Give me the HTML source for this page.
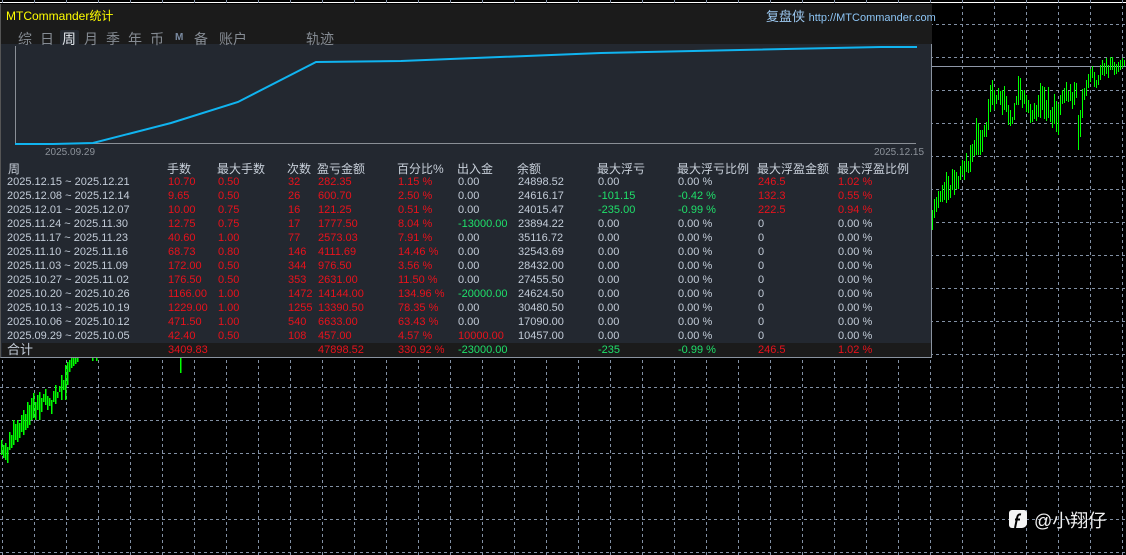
<!DOCTYPE html>
<html><head><meta charset="utf-8"><style>
*{margin:0;padding:0;box-sizing:border-box}
body{width:1126px;height:555px;background:#000;position:relative;overflow:hidden;font-family:"Liberation Sans","Noto Sans CJK SC",sans-serif;}
.a{position:absolute;white-space:nowrap}
#panel{position:absolute;left:0;top:4px;width:932px;height:354px;background:#232830;border-right:1px solid #8a93a0;border-bottom:1px solid #8a93a0;border-left:1px solid #555}
#title{position:absolute;left:0;top:0;width:931px;height:40px;background:#1b1b1b}
.t{font-size:11px;line-height:14px;color:#c3ccd8}
.r{color:#e8121c}.g{color:#1fe06a}
.h{font-size:12px;color:#c8d0da}
.tab{font-size:14px;color:#858b93;top:25px}
#tot{position:absolute;left:1px;top:339px;width:929px;height:14px;background:#1b1b1b}
</style></head><body>
<svg class="a" style="left:0;top:0" width="1126" height="555" shape-rendering="crispEdges">
<line x1="0" y1="2.5" x2="1126" y2="2.5" stroke="#fff" stroke-width="1"/>
<g stroke="#8290a4" stroke-width="1" stroke-dasharray="3,3">
<path d="M2.5 0V555M34.5 0V555M66.5 0V555M98.5 0V555M130.5 0V555M162.5 0V555M194.5 0V555M226.5 0V555M258.5 0V555M290.5 0V555M322.5 0V555M354.5 0V555M386.5 0V555M418.5 0V555M450.5 0V555M482.5 0V555M514.5 0V555M546.5 0V555M578.5 0V555M610.5 0V555M642.5 0V555M674.5 0V555M706.5 0V555M738.5 0V555M770.5 0V555M802.5 0V555M834.5 0V555M866.5 0V555M898.5 0V555M930.5 0V555M962.5 0V555M994.5 0V555M1026.5 0V555M1058.5 0V555M1090.5 0V555M1122.5 0V555"/>
<path d="M0 24.5H1126M0 57.5H1126M0 90.5H1126M0 123.5H1126M0 156.5H1126M0 189.5H1126M0 222.5H1126M0 255.5H1126M0 288.5H1126M0 321.5H1126M0 354.5H1126M0 387.5H1126M0 420.5H1126M0 453.5H1126M0 486.5H1126M0 519.5H1126M0 552.5H1126"/>
</g>
<line x1="931" y1="66.5" x2="1126" y2="66.5" stroke="#8f98a8"/>
<path stroke="#00ff00" stroke-width="1.5" fill="none" d="M1.5 440V455M3.5 445V458M5.5 443V460M7.5 447V463M9.5 432V450M11.5 435V448M13.5 420V445M15.5 424V440M17.5 420V442M19.5 423V438M21.5 415V432M23.5 410V435M25.5 414V430M27.5 402V428M29.5 405V425M31.5 398V420M33.5 393V418M35.5 402V420M37.5 395V410M39.5 392V420M41.5 398V412M43.5 394V402M45.5 389V405M47.5 396V410M49.5 398V406M51.5 400V414M53.5 391V402M55.5 385V404M57.5 392V398M59.5 386V392M61.5 375V400M63.5 380V390M65.5 365V400M67.5 362V385M69.5 360V372M71.5 358V368M73.5 358V366M75.5 358V364M77.5 358V362M92.5 357V361M96.5 357V361M180.5 357V373"/>
<path stroke="#00ff00" stroke-width="1" d="M932.5 210V230M934.5 199V218M936.5 197V212M938.5 191V208M940.5 191V202M942.5 185V202M944.5 182V200M946.5 172V203M948.5 176V200M950.5 185V198M952.5 169V190M954.5 170V195M956.5 172V189M958.5 176V189M960.5 166V180M962.5 160V175M964.5 161V180M966.5 153V172M968.5 161V173M970.5 145V172M972.5 144V162M974.5 140V156M976.5 118V155M978.5 123V155M980.5 130V155M982.5 130V152M984.5 125V137M986.5 122V137M988.5 99V130M990.5 85V112M992.5 80V105M994.5 90V110M996.5 95V104M998.5 88V100M1000.5 91V105M1002.5 90V115M1004.5 86V110M1006.5 96V112M1008.5 105V125M1010.5 110V126M1012.5 117V124M1014.5 103V120M1016.5 96V105M1018.5 76V105M1020.5 78V100M1022.5 90V108M1024.5 90V104M1026.5 95V112M1028.5 100V113M1030.5 104V123M1032.5 110V122M1034.5 103V119M1036.5 105V121M1038.5 95V117M1040.5 83V118M1042.5 86V110M1044.5 87V119M1046.5 100V121M1048.5 87V118M1050.5 110V122M1052.5 107V128M1054.5 94V124M1056.5 101V132M1058.5 104V135M1060.5 95V115M1062.5 90V104M1064.5 88V103M1066.5 82V101M1068.5 91V102M1070.5 84V101M1072.5 92V109M1074.5 82V105M1076.5 83V98M1078.5 115V150M1080.5 110V137M1082.5 89V118M1084.5 88V100M1086.5 80V96M1088.5 74V88M1090.5 69V82M1092.5 66V78M1094.5 72V87M1096.5 80V88M1098.5 75V85M1100.5 65V80M1102.5 60V75M1104.5 63V76M1106.5 58V74M1108.5 65V78M1110.5 57V70M1112.5 57V70M1114.5 62V75M1116.5 64V74M1118.5 62V72M1120.5 60V70M1122.5 58V68M1124.5 60V66"/>
</svg>

<div id="panel">
<div id="title"></div>
<div class="a" style="left:5px;top:3px;font-size:12px;color:#ffff00">MTCommander统计</div>
<div class="a" style="left:765px;top:2px;font-size:13px;color:#9cc8f0">复盘侠 <span style="font-size:11px;color:#8cc4f4">http://MTCommander.com</span></div>
<div class="a" style="left:59px;top:26px;width:19px;height:17px;background:#232830;border-radius:2px"></div>
<div class="a tab" style="left:17px">综</div>
<div class="a tab" style="left:39px">日</div>
<div class="a tab" style="left:61px;color:#dfe4ea">周</div>
<div class="a tab" style="left:83px">月</div>
<div class="a tab" style="left:105px">季</div>
<div class="a tab" style="left:127px">年</div>
<div class="a tab" style="left:149px">币</div>
<div class="a tab" style="left:174px;font-size:10px;top:28px;color:#7a8aa0;font-weight:bold">M</div>
<div class="a tab" style="left:193px">备</div>
<div class="a tab" style="left:218px">账户</div>
<div class="a tab" style="left:305px">轨迹</div>
<svg class="a" style="left:0;top:36px" width="931" height="120">
<line x1="14.5" y1="6" x2="14.5" y2="104" stroke="#8a8f96"/>
<line x1="14" y1="103.5" x2="915" y2="103.5" stroke="#8a8f96"/>
<polyline fill="none" stroke="#10b4f0" stroke-width="2" points="14,104 52,104 92,103 170,83 237,62 315,22 400,21 600,13 880,7 916,7"/>
<text x="44" y="115" font-size="10" fill="#8c929a" font-family="Liberation Sans">2025.09.29</text>
<text x="873" y="115" font-size="10" fill="#8c929a" font-family="Liberation Sans">2025.12.15</text>
</svg>
<div class="a h" style="left:7px;top:156px">周</div>
<div class="a h" style="left:166px;top:156px">手数</div>
<div class="a h" style="left:216px;top:156px">最大手数</div>
<div class="a h" style="left:286px;top:156px">次数</div>
<div class="a h" style="left:316px;top:156px">盈亏金额</div>
<div class="a h" style="left:396px;top:156px">百分比%</div>
<div class="a h" style="left:456px;top:156px">出入金</div>
<div class="a h" style="left:516px;top:156px">余额</div>
<div class="a h" style="left:596px;top:156px">最大浮亏</div>
<div class="a h" style="left:676px;top:156px">最大浮亏比例</div>
<div class="a h" style="left:756px;top:156px">最大浮盈金额</div>
<div class="a h" style="left:836px;top:156px">最大浮盈比例</div>
<div id="tot"></div>
<div class="a t" style="left:6px;top:171px;line-height:14px">2025.12.15 ~ 2025.12.21<br>2025.12.08 ~ 2025.12.14<br>2025.12.01 ~ 2025.12.07<br>2025.11.24 ~ 2025.11.30<br>2025.11.17 ~ 2025.11.23<br>2025.11.10 ~ 2025.11.16<br>2025.11.03 ~ 2025.11.09<br>2025.10.27 ~ 2025.11.02<br>2025.10.20 ~ 2025.10.26<br>2025.10.13 ~ 2025.10.19<br>2025.10.06 ~ 2025.10.12<br>2025.09.29 ~ 2025.10.05<br><span style="font-size:13px">合计</span></div>
<div class="a t r" style="left:167px;top:171px">10.70<br>9.65<br>10.00<br>12.75<br>40.60<br>68.73<br>172.00<br>176.50<br>1166.00<br>1229.00<br>471.50<br>42.40<br>3409.83</div>
<div class="a t r" style="left:217px;top:171px">0.50<br>0.50<br>0.75<br>0.75<br>1.00<br>0.80<br>0.50<br>0.50<br>1.00<br>1.00<br>1.00<br>0.50</div>
<div class="a t r" style="left:287px;top:171px">32<br>26<br>16<br>17<br>77<br>146<br>344<br>353<br>1472<br>1255<br>540<br>108</div>
<div class="a t r" style="left:317px;top:171px">282.35<br>600.70<br>121.25<br>1777.50<br>2573.03<br>4111.69<br>976.50<br>2631.00<br>14144.00<br>13390.50<br>6633.00<br>457.00<br>47898.52</div>
<div class="a t r" style="left:397px;top:171px">1.15 %<br>2.50 %<br>0.51 %<br>8.04 %<br>7.91 %<br>14.46 %<br>3.56 %<br>11.50 %<br>134.96 %<br>78.35 %<br>63.43 %<br>4.57 %<br>330.92 %</div>
<div class="a t" style="left:457px;top:171px">0.00<br>0.00<br>0.00<br><span class="g">-13000.00</span><br>0.00<br>0.00<br>0.00<br>0.00<br><span class="g">-20000.00</span><br>0.00<br>0.00<br><span class="r">10000.00</span><br><span class="g">-23000.00</span></div>
<div class="a t" style="left:517px;top:171px">24898.52<br>24616.17<br>24015.47<br>23894.22<br>35116.72<br>32543.69<br>28432.00<br>27455.50<br>24624.50<br>30480.50<br>17090.00<br>10457.00</div>
<div class="a t" style="left:597px;top:171px">0.00<br><span class="g">-101.15</span><br><span class="g">-235.00</span><br>0.00<br>0.00<br>0.00<br>0.00<br>0.00<br>0.00<br>0.00<br>0.00<br>0.00<br><span class="g">-235</span></div>
<div class="a t" style="left:677px;top:171px">0.00 %<br><span class="g">-0.42 %</span><br><span class="g">-0.99 %</span><br>0.00 %<br>0.00 %<br>0.00 %<br>0.00 %<br>0.00 %<br>0.00 %<br>0.00 %<br>0.00 %<br>0.00 %<br><span class="g">-0.99 %</span></div>
<div class="a t" style="left:757px;top:171px"><span class="r">246.5</span><br><span class="r">132.3</span><br><span class="r">222.5</span><br>0<br>0<br>0<br>0<br>0<br>0<br>0<br>0<br>0<br><span class="r">246.5</span></div>
<div class="a t" style="left:837px;top:171px"><span class="r">1.02 %</span><br><span class="r">0.55 %</span><br><span class="r">0.94 %</span><br>0.00 %<br>0.00 %<br>0.00 %<br>0.00 %<br>0.00 %<br>0.00 %<br>0.00 %<br>0.00 %<br>0.00 %<br><span class="r">1.02 %</span></div>
</div>

<svg class="a" style="left:1008px;top:509px" width="20" height="20"><path d="M4 1H16A3 3 0 0 1 19 4V14A5 5 0 0 1 14 19H4A3 3 0 0 1 1 16V4A3 3 0 0 1 4 1Z" fill="#f4f4f4"/><path d="M13 5.5C10.5 5 9.5 6.5 9.2 8.5L7 19M7 10.5H12" stroke="#000" stroke-width="2" fill="none"/></svg>
<div class="a" style="left:1034px;top:507px;font-size:18px;color:#f0f0f0">@小翔仔</div>
</body></html>
